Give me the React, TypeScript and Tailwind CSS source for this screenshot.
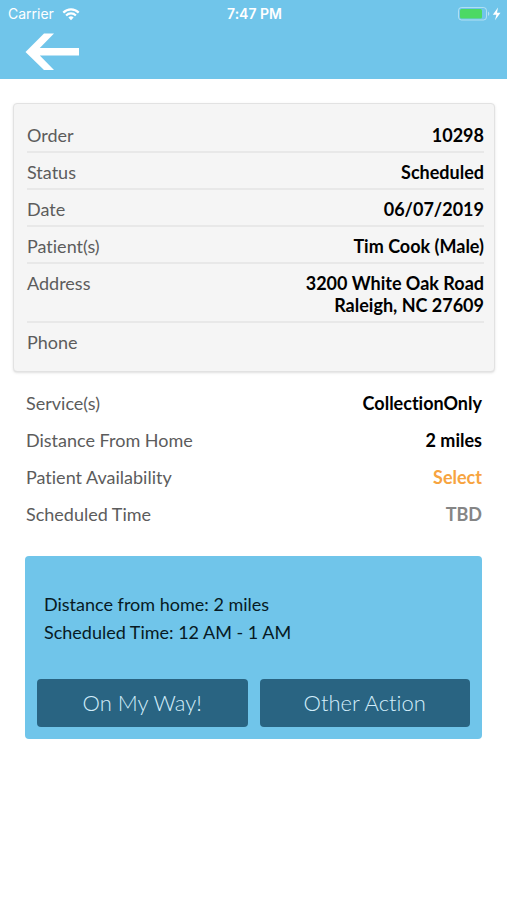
import type { ReactNode } from "react";

type Detail = { label: string; value: ReactNode };

const orderDetails: Detail[] = [
  { label: "Order", value: "10298" },
  { label: "Status", value: "Scheduled" },
  { label: "Date", value: "06/07/2019" },
  { label: "Patient(s)", value: "Tim Cook (Male)" },
  {
    label: "Address",
    value: (
      <>
        3200 White Oak Road
        <br />
        Raleigh, NC 27609
      </>
    ),
  },
  { label: "Phone", value: "" },
];

const visitDetails: Detail[] = [
  { label: "Service(s)", value: "CollectionOnly" },
  { label: "Distance From Home", value: "2 miles" },
  {
    label: "Patient Availability",
    value: (
      <button type="button" className="block text-[#f7a440]">
        Select
      </button>
    ),
  },
  { label: "Scheduled Time", value: <span className="text-[#858585]">TBD</span> },
];

function StatusBar() {
  return (
    <div className="grid grid-cols-3 items-center pt-1 pr-[6px] pl-2 font-['Inter',sans-serif] text-[14px] leading-5 text-white">
      <div className="flex items-center gap-2">
        <span>Carrier</span>
        <svg width="18" height="13" viewBox="0 0 17 13" fill="none" stroke="#fff" strokeWidth="2.2" aria-hidden="true">
          <path d="M.8 4.6a10.9 10.9 0 0 1 15.4 0" />
          <path d="M3.6 7.5a6.9 6.9 0 0 1 9.8 0" />
          <path d="M5.9 9.6a3.7 3.7 0 0 1 5.2 0L8.5 12.3z" fill="#fff" stroke="none" />
        </svg>
      </div>
      <span className="text-center font-semibold">7:47 PM</span>
      <svg className="justify-self-end" width="43" height="14" viewBox="0 0 43 14" aria-hidden="true">
        <rect x=".5" y=".5" width="28" height="12.5" rx="3" fill="none" stroke="#fff" strokeOpacity=".45" />
        <rect x="2" y="2" width="22" height="9.5" rx="1.5" fill="#4cd964" />
        <path d="M30 4.5c1.8.8 1.8 3.6 0 4.4z" fill="#fff" fillOpacity=".5" />
        <path d="M40 .5 34.8 7.7h3.6L37 13.2l5.5-7.4H39z" fill="#fff" />
      </svg>
    </div>
  );
}

export default function App() {
  return (
    <div className="min-h-screen bg-white font-['Lato',sans-serif] text-[18px] leading-[22px] text-[#5c5c5c] [font-variant-ligatures:none]">
      <header className="bg-[#70c5ea] pb-2">
        <StatusBar />
        <button type="button" aria-label="Back" className="mt-2 ml-6 block">
          <svg width="56" height="39" viewBox="0 0 56 39" aria-hidden="true">
            <path d="M1.5 20 20 1.5h10L15.8 16H55v7.5H15.8L30 38H20z" fill="#fff" />
          </svg>
        </button>
      </header>

      <main className="pt-6 pr-3 pl-[13px]">
        <dl className="rounded-[4px] border border-[#e2e2e2] bg-[#f5f5f5] pt-3 pr-[10px] pb-[13px] pl-[13px] shadow">
          {orderDetails.map(({ label, value }) => (
            <div key={label} className="flex justify-between border-b-2 border-[#e8e8e8] pt-2 pb-[5px] last:border-b-0">
              <dt>{label}</dt>
              <dd className="text-right font-bold text-black">{value}</dd>
            </div>
          ))}
        </dl>

        <dl className="mt-5 flex flex-col gap-[15px] px-[13px]">
          {visitDetails.map(({ label, value }) => (
            <div key={label} className="flex justify-between">
              <dt>{label}</dt>
              <dd className="text-right font-bold text-black">{value}</dd>
            </div>
          ))}
        </dl>

        <section className="mt-[31px] mr-[13px] ml-3 rounded-[4px] bg-[#70c5ea] px-3 pt-[34px] pb-3">
          <div className="px-[7px] leading-7 text-[#071a24]">
            <p>Distance from home: 2 miles</p>
            <p>Scheduled Time: 12 AM - 1 AM</p>
          </div>
          <div className="mt-[33px] grid grid-cols-2 gap-3 text-[22px] font-light text-[#d3eefb]">
            <button type="button" className="h-12 rounded-[4px] bg-[#296482]">
              On My Way!
            </button>
            <button type="button" className="h-12 rounded-[4px] bg-[#296482]">
              Other Action
            </button>
          </div>
        </section>
      </main>
    </div>
  );
}
